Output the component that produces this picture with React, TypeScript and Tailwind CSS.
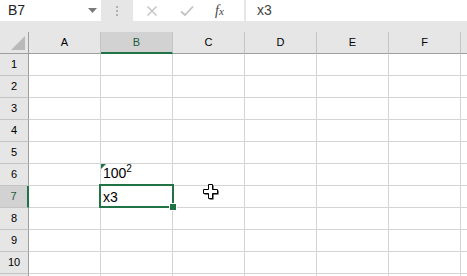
import React from "react";

const cols = ["A", "B", "C", "D", "E", "F"];
const rows = [1, 2, 3, 4, 5, 6, 7, 8, 9, 10, 11];
const GREEN = "#217346";

function Cursor() {
  return (
    <svg width="17" height="17" viewBox="0 0 17 17" className="absolute z-20 left-[202px] top-[183px]">
      <path d="M6.5 1.5h4v5h5v4h-5v5h-4v-5h-5v-4h5z" fill="#000" transform="translate(1,1)" />
      <path d="M6.5 1.5h4v5h5v4h-5v5h-4v-5h-5v-4h5z" fill="#fff" stroke="#000" strokeWidth="1" />
    </svg>
  );
}

export default function App() {
  return (
    <div
      className="relative w-[467px] h-[276px] overflow-hidden bg-white text-black"
      style={{ fontFamily: '"Liberation Sans", Arial, sans-serif' }}
    >
      {/* formula bar */}
      <div className="h-[32px] bg-[#e6e6e6] flex flex-col">
        <div className="flex h-[21px]">
          <div className="w-[101px] bg-white flex items-center justify-between pl-[8px] pr-[4px]">
            <span className="text-[14px] text-[#222]">B7</span>
            <svg width="9" height="5" viewBox="0 0 9 5"><path d="M0 0h9L4.5 5z" fill="#7a7a7a" /></svg>
          </div>
          <div className="w-[32px] flex items-center justify-center">
            <div className="flex flex-col gap-[2px]">
              <div className="w-[2px] h-[2px] bg-[#b0b0b0]" />
              <div className="w-[2px] h-[2px] bg-[#b0b0b0]" />
              <div className="w-[2px] h-[2px] bg-[#b0b0b0]" />
            </div>
          </div>
          <div className="w-[111px] bg-white flex items-center">
            <svg width="12" height="12" viewBox="0 0 12 12" className="ml-[13px]">
              <path d="M1.5 1.5l9 9M10.5 1.5l-9 9" stroke="#c2c2c2" strokeWidth="1.4" />
            </svg>
            <svg width="14" height="12" viewBox="0 0 14 12" className="ml-[22px]">
              <path d="M1 6.5l4 3.5 8-8.5" stroke="#c2c2c2" strokeWidth="1.8" fill="none" />
            </svg>
            <span
              className="ml-[21px] text-[14px] italic text-[#444]"
              style={{ fontFamily: '"Liberation Serif", serif' }}
            >
              f<span className="text-[11px]">x</span>
            </span>
          </div>
          <div className="w-[2px]" />
          <div className="flex-1 bg-white flex items-center pl-[11px]">
            <span className="text-[14px] text-[#444]">x3</span>
          </div>
        </div>
      </div>

      {/* column headers */}
      <div className="flex h-[22px] bg-[#e6e6e6] text-[11px]">
        <div className="w-[29px] border-r border-b border-[#9e9e9e] flex items-end justify-end pr-[3px] pb-[3px]">
          <svg width="14" height="14" viewBox="0 0 14 14"><path d="M14 0V14H0z" fill="#b9b9b9" /></svg>
        </div>
        {cols.map((c) => (
          <div
            key={c}
            className={
              c === "B"
                ? "w-[72px] bg-[#d2d2d2] border-r border-[#c4c4c4] border-b-2 border-b-[#217346] flex items-center justify-center text-[#1e5c3a]"
                : "w-[72px] border-r border-[#c4c4c4] border-b border-b-[#9e9e9e] flex items-center justify-center"
            }
          >
            {c}
          </div>
        ))}
        <div className="flex-1 border-b border-[#9e9e9e]" />
      </div>

      {/* rows */}
      {rows.map((r) => (
        <div key={r} className="flex h-[22px]">
          <div
            className={
              r === 7
                ? "w-[29px] bg-[#d2d2d2] border-r-2 border-r-[#217346] border-b border-b-[#c4c4c4] flex items-center justify-center text-[11px] text-[#1e5c3a]"
                : "w-[29px] bg-[#e6e6e6] border-r border-r-[#9e9e9e] border-b border-b-[#c4c4c4] flex items-center justify-center text-[11px]"
            }
          >
            {r <= 10 ? r : ""}
          </div>
          {cols.map((c) => (
            <div key={c} className="relative w-[72px] border-r border-b border-[#d4d4d4] flex items-end pl-[2px] pb-[2px] text-[14px] leading-[16px]">
              {c === "B" && r === 6 && (
                <>
                  <svg width="5" height="5" viewBox="0 0 5 5" className="absolute left-0 top-0">
                    <path d="M0 0h5L0 5z" fill={GREEN} />
                  </svg>
                  <span>
                    100<span className="text-[10px] relative top-[-6px]">2</span>
                  </span>
                </>
              )}
              {c === "B" && r === 7 && (
                <>
                  <span>x3</span>
                  <div className="absolute z-10 left-[-2px] top-[-2px] w-[75px] h-[24px] border-2 border-[#217346]" />
                  <div className="absolute z-10 left-[69px] top-[18px] w-[6px] h-[6px] bg-[#217346] outline outline-1 outline-white" />
                </>
              )}
            </div>
          ))}
          <div className="flex-1 border-b border-[#d4d4d4]" />
        </div>
      ))}

      <Cursor />
    </div>
  );
}
